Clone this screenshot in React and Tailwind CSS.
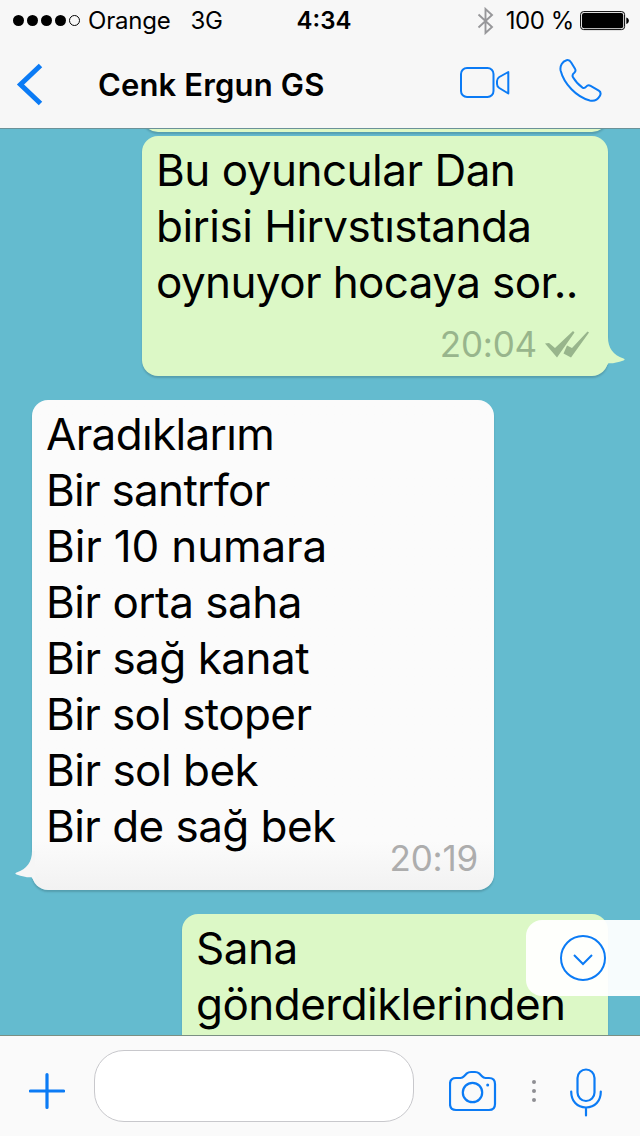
import clsx from "clsx";

const messages = [
  {
    mine: true,
    box: "w-[466px] h-60 mr-8 self-end",
    time: "20:04",
    lines: [
      { text: "Bu oyuncular Dan", spacing: "tracking-[-0.5px]" },
      { text: "birisi Hirvstıstanda", spacing: "tracking-[-0.5px]" },
      { text: "oynuyor hocaya sor..", spacing: "tracking-[-0.6px]" },
    ],
  },
  {
    mine: false,
    box: "w-[462px] h-[490px] ml-8 self-start",
    time: "20:19",
    lines: [
      { text: "Aradıklarım", spacing: "tracking-[-0.65px]" },
      { text: "Bir santrfor", spacing: "tracking-[-0.7px]" },
      { text: "Bir 10 numara", spacing: "tracking-[-0.15px]" },
      { text: "Bir orta saha", spacing: "tracking-[-0.5px]" },
      { text: "Bir sağ kanat", spacing: "tracking-[-0.5px]" },
      { text: "Bir sol stoper", spacing: "tracking-[-0.6px]" },
      { text: "Bir sol bek", spacing: "tracking-[-0.5px]" },
      { text: "Bir de sağ bek", spacing: "tracking-[-0.55px]" },
    ],
  },
  {
    mine: true,
    box: "w-[426px] h-60 mr-8 self-end",
    lines: [
      { text: "Sana", spacing: "tracking-[-0.5px]" },
      { text: "gönderdiklerinden", spacing: "tracking-[-0.52px]" },
    ],
  },
];

function StatusBar() {
  return (
    <div className="grid h-[41px] grid-cols-[1fr_auto_1fr] items-center pl-[13px] pr-[10px] text-2xl">
      <div className="flex items-center">
        <div className="flex gap-[3px]">
          {[0, 1, 2, 3].map((i) => (
            <span key={i} className="size-[11px] rounded-full bg-black" />
          ))}
          <span className="size-[11px] rounded-full border border-black" />
        </div>
        <span className="ml-2 tracking-[-0.2px]">Orange</span>
        <span className="ml-5 tracking-[-0.5px]">3G</span>
      </div>
      <span className="ml-[5px] font-semibold">4:34</span>
      <div className="flex items-center justify-end">
        <svg width="17" height="28" viewBox="0 0 17 28" fill="none" stroke="#97979a" strokeWidth="1.9">
          <path d="M1.500 7.500 15 20 8.500 26V2L15 8 1.500 20.500" />
        </svg>
        <span className="ml-3 whitespace-nowrap tracking-[-0.4px]">100 %</span>
        <svg className="ml-1.5 shrink-0" width="50" height="20" viewBox="0 0 50 20">
          <rect x=".6" y=".6" width="44" height="18" rx="3" fill="none" stroke="#000" />
          <rect x="2" y="2" width="41.2" height="15.2" rx="2" />
          <path d="M46.3 6.500c3.400 1 3.400 5.500 0 6.500z" />
        </svg>
      </div>
    </div>
  );
}

function Header() {
  return (
    <header className="h-[129px] shrink-0 border-b border-[#6b9298] bg-[#f7f7f7]">
      <StatusBar />
      <div className="flex h-[87px] items-center pl-4 pr-[37px] text-[#0b7bf5]">
        <svg width="28" height="44" viewBox="0 0 28 44" fill="none" stroke="currentColor" strokeWidth="5">
          <path d="M24.500 2.500 4.500 21.500l20 19" />
        </svg>
        <h1 className="ml-[54px] mt-px flex-1 whitespace-nowrap text-[31px] font-semibold tracking-[0.15px] text-black">
          Cenk Ergun GS
        </h1>
        <svg className="mb-1" width="50" height="32" viewBox="0 0 50 32" fill="none" stroke="currentColor" strokeWidth="2" strokeLinejoin="round">
          <rect x="1" y="1" width="32.500" height="29" rx="6" />
          <path d="M48.300 5v21.500l-9-5.500q-2.300-1.500-2.300-4v-3q0-2.500 2.300-4z" />
        </svg>
        <svg className="mb-2 ml-[49px]" width="44" height="44" viewBox="0 0 44 44" fill="none" stroke="currentColor" strokeWidth="2" strokeLinejoin="round">
          <path d="M7.500 1.200C9.500.7 11 1.500 12 3.300l4 6.500c1 1.700.4 3-.7 4-2 1.600-2.400 2.600-1.300 4.500 2.700 4.500 6 8 9.500 10.300 1.300.8 2.500.5 3.700-1 1.200-1.400 2.800-1.600 4.400-.7l8.200 4.800c2.200 1.400 2.200 3.200 1 5.300-2.300 4-5.600 5.500-10 4.500C17.500 38 5 25 1.600 11.500.7 6.500 3.500 2.500 7.500 1.200z" />
        </svg>
      </div>
    </header>
  );
}

function Tail({ mine }) {
  return (
    <svg
      className={clsx("absolute", mine ? "-right-[17px] bottom-[5px]" : "-left-[17px] bottom-[5px] -scale-x-100")}
      width="20"
      height="34"
      viewBox="0 0 20 34"
      fill={mine ? "#dcf8c6" : "#f6f6f6"}
    >
      <path d="M0 0h3c0 11 5 18 15.500 21.500 1.500.6 1.500 1.600 0 2-6 2-10 3-15 2.800L0 31z" />
    </svg>
  );
}

function Ticks() {
  return (
    <svg width="44" height="27" viewBox="0 0 44 27" fill="#98b58c">
      <path d="M0 12.500 4 12l6 5L28 0l1.500 1.500L12 26.500z" />
      <path d="M22 14.500l5 2.500L42.500.5 44 1.500l-18 25-7.500-4z" />
    </svg>
  );
}

function Bubble({ mine, box, time, lines }) {
  return (
    <div
      className={clsx(
        "relative flex shrink-0 flex-col rounded-2xl px-3.5 pt-1.5 shadow-[0_2px_2px_rgba(0,0,0,0.16)]",
        mine ? "bg-[#dcf8c6]" : "bg-linear-to-b from-[#fbfbfb] from-90% to-[#f2f2f2]",
        box
      )}
    >
      {lines.map((line) => (
        <p key={line.text} className="flex whitespace-nowrap text-[44px] leading-[56px]">
          <span className={line.spacing}>{line.text}</span>
        </p>
      ))}
      {time && (
        <div
          className={clsx(
            "flex items-center self-end text-[35px] leading-10",
            mine ? "mt-auto mb-3 mr-[5px] gap-2 text-[#98b58c]" : "-mt-4 mr-0.5 text-[#adadad]"
          )}
        >
          <span className="tracking-[-0.2px]">{time}</span>
          {mine && <Ticks />}
        </div>
      )}
      {time && <Tail mine={mine} />}
    </div>
  );
}

function Composer() {
  return (
    <footer className="flex h-[101px] shrink-0 items-center border-t border-[#7b8f83] bg-[#fafafa] pl-[29px] pr-9 text-[#0b7bf5]">
      <svg className="mt-2.5" width="36" height="38" viewBox="0 0 36 38" fill="none" stroke="currentColor" strokeWidth="3.200" strokeLinecap="round">
        <path d="M18 2.500v33M1.500 19h33" />
      </svg>
      <div className="ml-[29px] h-[72px] w-80 rounded-[30px] border border-[#c8c8cc] bg-white" />
      <svg className="ml-[35px] mt-2.5" width="48" height="42" viewBox="0 0 48 42" fill="none" stroke="currentColor" strokeWidth="2.200" strokeLinejoin="round">
        <path d="M7 8h4.500q2 0 3.500-1.700l2.500-2.600Q19.500 2 22 2h4q2.500 0 4.500 1.700L33 6.300Q34.500 8 36.500 8H40q6 0 6 6v20q0 6-6 6H7q-6 0-6-6V14q0-6 6-6z" />
        <circle cx="23.500" cy="22.500" r="9.700" />
        <circle cx="38.700" cy="15" r="1.500" fill="currentColor" stroke="none" />
      </svg>
      <div className="ml-[35px] mt-2.5 flex flex-col gap-[5px]">
        <span className="size-1 rounded-full bg-[#8e8e93]" />
        <span className="size-1 rounded-full bg-[#8e8e93]" />
        <span className="size-1 rounded-full bg-[#8e8e93]" />
      </div>
      <svg className="ml-[34px] mt-3" width="32" height="49" viewBox="0 0 32 49" fill="none" stroke="currentColor" strokeWidth="2.200" strokeLinecap="round">
        <rect x="7.500" y="1.500" width="17" height="31.500" rx="8.500" />
        <path d="M1.200 23.500C1.200 33 7 39.500 16 39.500S30.800 33 30.800 23.500M16 39.500v8" />
      </svg>
    </footer>
  );
}

export default function App() {
  return (
    <div className="flex h-[1136px] w-[640px] flex-col overflow-hidden bg-[#64bbcf] font-['Inter',sans-serif] text-black">
      <Header />
      <main className="relative flex min-h-0 flex-1 flex-col overflow-hidden">
        <div className="-mt-[57px] mb-1 mr-8 h-[60px] w-[466px] shrink-0 self-end rounded-2xl bg-[#dcf8c6] shadow-[0_2px_2px_rgba(0,0,0,0.16)]" />
        <div className="flex flex-col gap-6">
          {messages.map((message) => (
            <Bubble key={message.lines[0].text} {...message} />
          ))}
        </div>

        {/* Scroll to latest */}
        <button className="absolute bottom-[39px] right-0 flex h-[76px] w-[114px] items-center rounded-l-2xl bg-white/95 pl-[34px]">
          <svg width="46" height="46" viewBox="0 0 46 46" fill="none" stroke="#0b7bf5" strokeWidth="2">
            <circle cx="23" cy="23" r="22" />
            <path d="M14 20l9 9 9-9" />
          </svg>
        </button>
      </main>
      <Composer />
    </div>
  );
}
